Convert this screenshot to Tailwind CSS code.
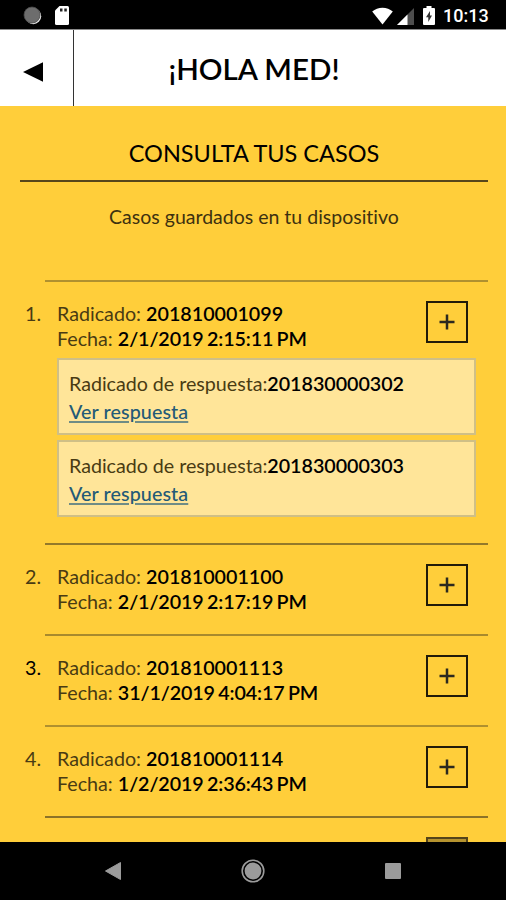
<!DOCTYPE html>
<html lang="es">

<head>
    <meta charset="UTF-8">
    <meta name="viewport" content="width=device-width, initial-scale=1.0">
    <title>Consulta tus casos</title>
    <script src="https://cdn.jsdelivr.net/npm/@tailwindcss/browser@4"></script>
</head>

<body class="bg-black">
    <div class="w-[506px] h-[900px] flex flex-col overflow-hidden bg-[#ffce3a] font-['Lato',sans-serif] text-black [font-variant-ligatures:none]">

        <!-- Status bar -->
        <div class="h-[29px] shrink-0 bg-black flex items-center justify-between pl-[23px] pr-[18px]">
            <div class="flex items-center gap-[13px] mt-[2px]">
                <svg class="w-[19px] h-[19px]" viewBox="0 0 19 19">
                    <circle cx="10.200" cy="10.200" r="8" fill="#e4e4e4" />
                    <circle cx="9" cy="9" r="8" fill="#6d6d6d" stroke="#4a4a4a" stroke-width="0.8" />
                </svg>
                <svg class="w-[14px] h-[19px]" viewBox="0 0 14 19">
                    <path d="M4.500 0H12.500Q14 0 14 1.500V17.500Q14 19 12.500 19H1.500Q0 19 0 17.500V4.500Z" fill="#fff" />
                    <path d="M5 2.500h2.500v3H5zM9.300 2.500h2.500v3H9.300z" fill="#222" />
                </svg>
            </div>
            <div class="flex items-center">
                <svg class="w-[21px] h-[18px] mt-[2px]" viewBox="0 0 21 18">
                    <path d="M10.500 17.500L0.200 4.600Q4.500 0.700 10.500 0.700T20.800 4.600Z" fill="#fff" />
                </svg>
                <svg class="w-[17px] h-[17px] ml-[4px] mt-[3px]" viewBox="0 0 17 17">
                    <path d="M17 0V17H0Z" fill="#4d4d4d" />
                    <path d="M10.500 6.500V17H0Z" fill="#fff" />
                </svg>
                <svg class="w-[12px] h-[19px] ml-[9px] mt-[2px]" viewBox="0 0 12 19">
                    <path d="M3.500 0h5v2H11Q12 2 12 3V18Q12 19 11 19H1Q0 19 0 18V3Q0 2 1 2H3.500Z" fill="#fff" />
                    <path d="M7 5L3 11.300H5.300V16L9 9.500H7Z" fill="#333" />
                </svg>
                <span class="w-[45px] ml-[8px] mt-[3px] font-['Roboto',sans-serif] font-medium text-[18px] leading-none whitespace-nowrap text-white">10:13</span>
            </div>
        </div>

        <!-- Header -->
        <div class="h-[77px] shrink-0 bg-white border-t border-[#8a8a8a] flex">
            <div class="w-[74px] border-r border-[#333] flex items-center pl-[23px] pt-[7px]">
                <svg class="w-[20px] h-[20px]" viewBox="0 0 20 20">
                    <path d="M0 10L20 0.300V19.700Z" fill="#000" />
                </svg>
            </div>
            <h1 class="flex-1 pr-[72px] pt-[2px] flex items-center justify-center text-[29.5px] font-semibold">¡HOLA MED!</h1>
        </div>

        <!-- Cases -->
        <div class="h-[736px] shrink-0 overflow-hidden">
            <h2 class="h-[76px] ml-[20px] mr-[18px] pt-[32px] border-b-2 border-[#57461a] text-center text-[23.5px] leading-[30px]">CONSULTA TUS CASOS</h2>
            <p class="h-[98px] pt-[22px] pl-[2px] text-center text-[19.5px] leading-[26px] text-[#3d3110]">Casos guardados en tu dispositivo</p>

            <ol class="text-[19.7px] leading-[25px] text-[#493b13]">
                <li class="h-[263px] ml-[45px] mr-[18px] border-t-2 border-[#b0902f]">
                    <div class="flex pt-[19px] -ml-[20px]">
                        <span class="w-[32px]">1.</span>
                        <div class="flex-1">
                            <p>Radicado: <b class="font-semibold text-black">201810001099</b></p>
                            <p>Fecha: <b class="font-semibold text-black tracking-[-0.1px] [word-spacing:-1.5px]">2/1/2019 2:15:11 PM</b></p>
                        </div>
                        <button class="size-[42px] mr-[20px] border-2 border-[#211b09] flex items-center justify-center">
                            <svg class="w-[16px] h-[16px]" viewBox="0 0 16 16"><path d="M8 0.500V15.500M0.500 8H15.500" stroke="#2b291f" stroke-width="2.500" /></svg>
                        </button>
                    </div>
                    <div class="ml-[12px] mr-[12px] mt-[7px] flex flex-col gap-[5px]">
                        <div class="h-[77px] px-[10px] pt-[10px] border-2 border-[#cfbf86] bg-[#ffe599] leading-[27.5px]">
                            <p class="tracking-[-0.03px]">Radicado de respuesta:<b class="font-semibold text-black">201830000302</b></p>
                            <a href="#" class="underline decoration-2 decoration-[#6f8c85] underline-offset-2 font-medium tracking-[0.1px] text-[#235a77]">Ver respuesta</a>
                        </div>
                        <div class="h-[77px] px-[10px] pt-[10px] border-2 border-[#cfbf86] bg-[#ffe599] leading-[27.5px]">
                            <p class="tracking-[-0.03px]">Radicado de respuesta:<b class="font-semibold text-black">201830000303</b></p>
                            <a href="#" class="underline decoration-2 decoration-[#6f8c85] underline-offset-2 font-medium tracking-[0.1px] text-[#235a77]">Ver respuesta</a>
                        </div>
                    </div>
                </li>
                <li class="h-[91px] ml-[45px] mr-[18px] border-t-2 border-[#94792a]">
                    <div class="flex pt-[19px] -ml-[20px]">
                        <span class="w-[32px]">2.</span>
                        <div class="flex-1">
                            <p>Radicado: <b class="font-semibold text-black">201810001100</b></p>
                            <p>Fecha: <b class="font-semibold text-black tracking-[-0.1px] [word-spacing:-1.5px]">2/1/2019 2:17:19 PM</b></p>
                        </div>
                        <button class="size-[42px] mr-[20px] border-2 border-[#211b09] flex items-center justify-center">
                            <svg class="w-[16px] h-[16px]" viewBox="0 0 16 16"><path d="M8 0.500V15.500M0.500 8H15.500" stroke="#2b291f" stroke-width="2.500" /></svg>
                        </button>
                    </div>
                </li>
                <li class="h-[91px] ml-[45px] mr-[18px] border-t-2 border-[#a88a2d]">
                    <div class="flex pt-[19px] -ml-[20px]">
                        <span class="w-[32px] text-black">3.</span>
                        <div class="flex-1">
                            <p>Radicado: <b class="font-semibold text-black">201810001113</b></p>
                            <p>Fecha: <b class="font-semibold text-black tracking-[-0.1px] [word-spacing:-1.5px]">31/1/2019 4:04:17 PM</b></p>
                        </div>
                        <button class="size-[42px] mr-[20px] border-2 border-[#211b09] flex items-center justify-center">
                            <svg class="w-[16px] h-[16px]" viewBox="0 0 16 16"><path d="M8 0.500V15.500M0.500 8H15.500" stroke="#2b291f" stroke-width="2.500" /></svg>
                        </button>
                    </div>
                </li>
                <li class="h-[91px] ml-[45px] mr-[18px] border-t-2 border-[#b0902f]">
                    <div class="flex pt-[19px] -ml-[20px]">
                        <span class="w-[32px]">4.</span>
                        <div class="flex-1">
                            <p>Radicado: <b class="font-semibold text-black">201810001114</b></p>
                            <p>Fecha: <b class="font-semibold text-black tracking-[-0.1px] [word-spacing:-1.5px]">1/2/2019 2:36:43 PM</b></p>
                        </div>
                        <button class="size-[42px] mr-[20px] border-2 border-[#211b09] flex items-center justify-center">
                            <svg class="w-[16px] h-[16px]" viewBox="0 0 16 16"><path d="M8 0.500V15.500M0.500 8H15.500" stroke="#2b291f" stroke-width="2.500" /></svg>
                        </button>
                    </div>
                </li>
                <li class="h-[91px] ml-[45px] mr-[18px] border-t-2 border-[#8c7228]">
                    <div class="flex justify-end pt-[19px]">
                        <button class="size-[42px] mr-[20px] border-2 border-[#54441a] bg-[#b5932f]"></button>
                    </div>
                </li>
            </ol>
        </div>

        <!-- Navigation bar -->
        <div class="flex-1 bg-black flex items-center">
            <svg class="w-[16px] h-[18px] ml-[105px]" viewBox="0 0 16 18">
                <path d="M0.500 9L15.500 0.500V17.500Z" fill="#9b9b9b" stroke="#9b9b9b" stroke-linejoin="round" />
            </svg>
            <svg class="w-[24px] h-[24px] ml-[120px]" viewBox="0 0 24 24">
                <circle cx="12" cy="12" r="10.800" fill="none" stroke="#9b9b9b" stroke-width="1.600" />
                <circle cx="12" cy="12" r="8.400" fill="#9b9b9b" />
            </svg>
            <div class="size-[16px] ml-[120px] rounded-[1px] bg-[#9b9b9b]"></div>
        </div>
    </div>
</body>

</html>
